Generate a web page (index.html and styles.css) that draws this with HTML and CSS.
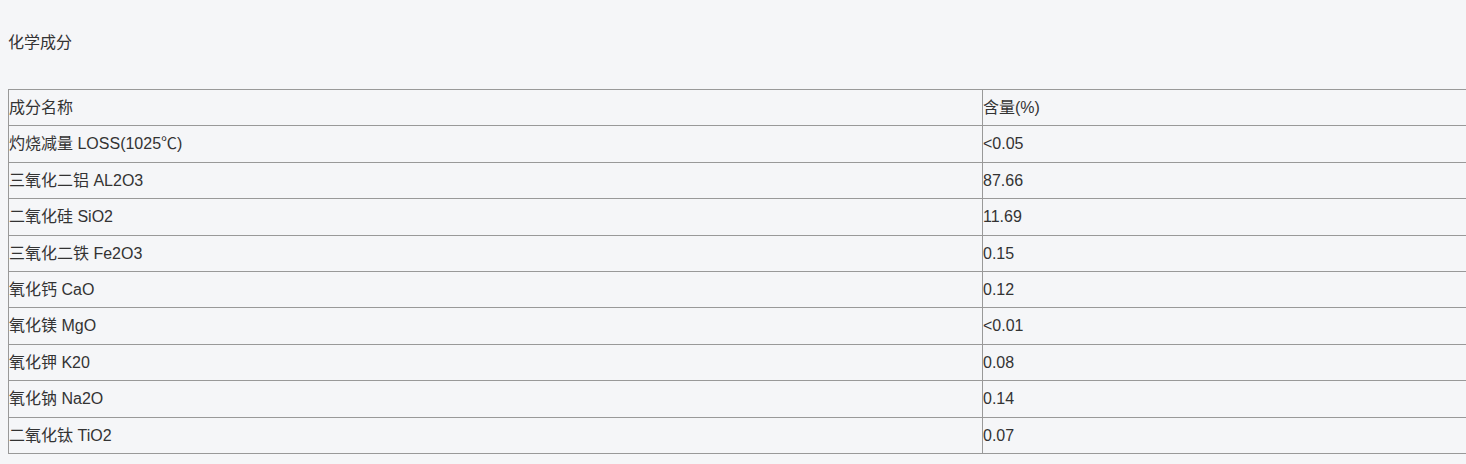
FILE: index.html
```html
<!DOCTYPE html>
<html lang="zh">
<head>
<meta charset="utf-8">
<title>化学成分</title>
<link rel="stylesheet" href="styles.css">
</head>
<body>
<div class="page">
  <p class="title">化学成分</p>
  <table class="comp">
    <colgroup><col class="c-name"><col class="c-val"></colgroup>
    <tbody>
      <tr><td>成分名称</td><td>含量(%)</td></tr>
      <tr><td>灼烧减量 LOSS(1025℃)</td><td>&lt;0.05</td></tr>
      <tr><td>三氧化二铝 AL2O3</td><td>87.66</td></tr>
      <tr><td>二氧化硅 SiO2</td><td>11.69</td></tr>
      <tr><td>三氧化二铁 Fe2O3</td><td>0.15</td></tr>
      <tr><td>氧化钙 CaO</td><td>0.12</td></tr>
      <tr><td>氧化镁 MgO</td><td>&lt;0.01</td></tr>
      <tr><td>氧化钾 K20</td><td>0.08</td></tr>
      <tr><td>氧化钠 Na2O</td><td>0.14</td></tr>
      <tr><td>二氧化钛 TiO2</td><td>0.07</td></tr>
    </tbody>
  </table>
</div>
</body>
</html>
```
FILE: styles.css
```css
html, body {
  margin: 0;
  padding: 0;
  background: #f5f6f8;
  overflow: hidden;
}
body {
  font-family: "Liberation Sans", Arial, "Noto Sans CJK SC", sans-serif;
  font-size: 16px;
  color: #333;
}
.page {
  padding: 33px 0 0 8px;
}
.title {
  margin: 0 0 36px 0;
  line-height: 20px;
}
.comp {
  border-collapse: collapse;
  width: 1520px;
  table-layout: fixed;
}
.c-name { width: 974px; }
.comp td {
  border: 1px solid #999;
  padding: 8px 0 7px 0;
  line-height: 20.4px;
  vertical-align: middle;
  text-align: left;
}
```
